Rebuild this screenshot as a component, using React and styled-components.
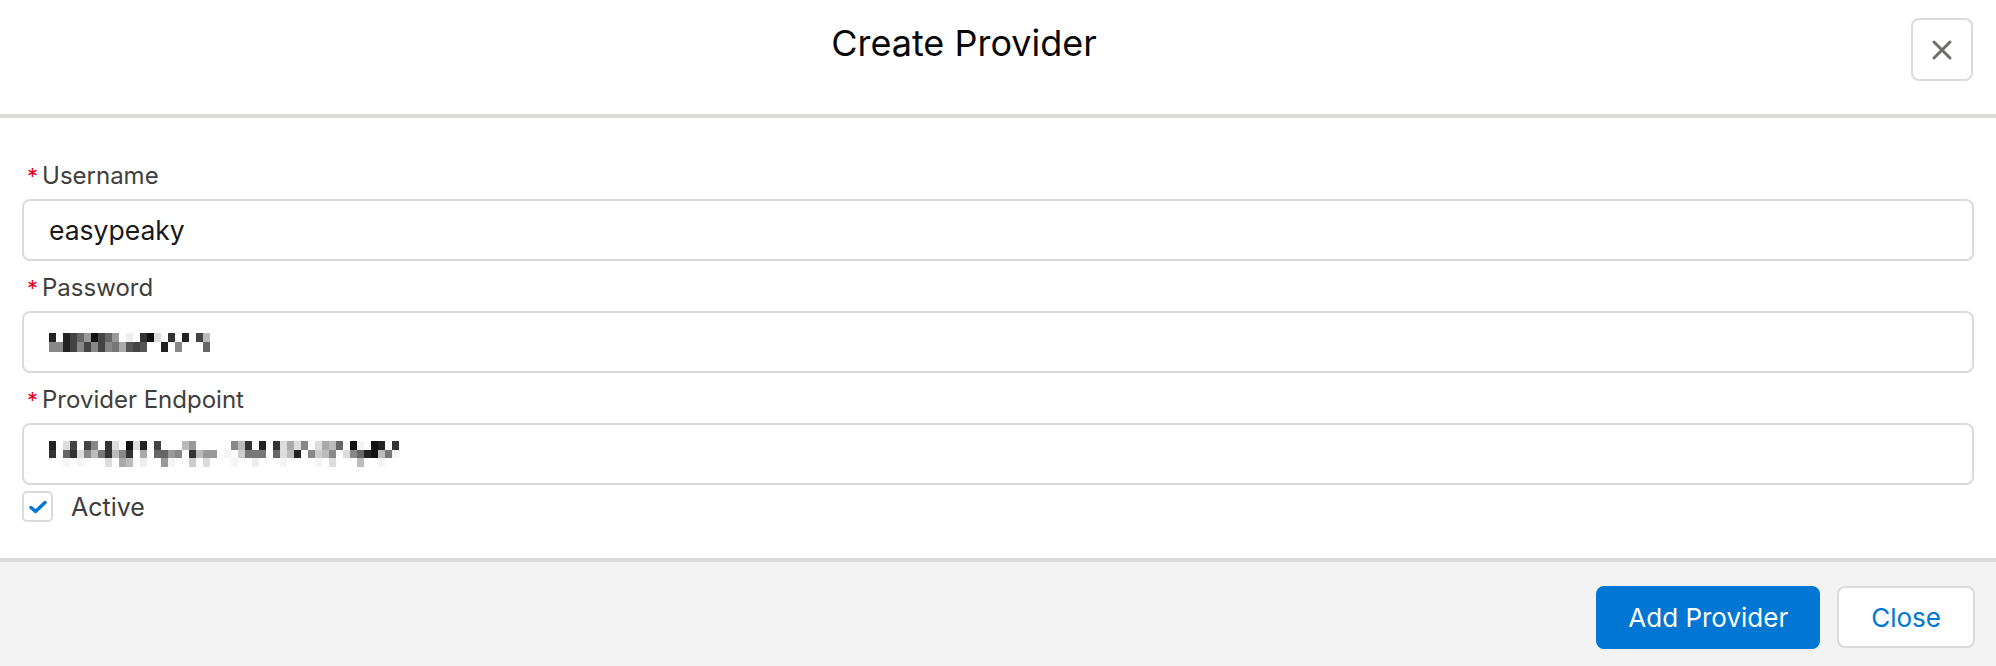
import React from 'react';
import styled, { createGlobalStyle } from 'styled-components';

const GlobalStyle = createGlobalStyle`
  html, body {
    margin: 0;
    padding: 0;
    background: #fff;
  }
  body {
    font-family: Inter, "Noto Sans", "Liberation Sans", sans-serif;
    color: #181818;
  }
  * { box-sizing: border-box; }
`;

const Modal = styled.div`
  height: 666px;
  display: flex;
  flex-direction: column;
  overflow: hidden;
`;

const Header = styled.header`
  height: 118px;
  flex-shrink: 0;
  display: flex;
  align-items: flex-start;
  gap: 5px;
  padding: 18px 23px 0 22px;
  border-bottom: 4px solid #dddbda;
`;

const Title = styled.h2`
  flex: 1;
  margin: 0;
  text-align: center;
  font-size: 36px;
  font-weight: 400;
  line-height: 50px;
  color: #080707;
`;

const IconButton = styled.button`
  width: 62px;
  height: 63px;
  border: 2px solid #dddbda;
  border-radius: 8px;
  background: #fff;
  display: flex;
  align-items: center;
  justify-content: center;
  padding: 0;
  cursor: pointer;
`;

const Body = styled.div`
  flex: 1;
  padding: 43px 22px 0 22px;
`;

const Field = styled.div`
  margin-bottom: 12px;
`;

const Label = styled.label`
  display: flex;
  align-items: center;
  font-size: 24px;
  line-height: 30px;
  color: #3e3e3c;
  margin-bottom: 8px;
`;

const Required = styled.abbr`
  color: #ea001e;
  text-decoration: none;
  margin: 0 4px 0 5px;
  font-size: 22px;
`;

const InputBox = styled.div`
  height: 62px;
  border: 2px solid #dddbda;
  border-radius: 8px;
  background: #fff;
  display: flex;
  align-items: center;
  padding: 0 25px;
  font-size: 26.5px;
  color: #181818;
`;

const Mosaic = styled.div`
  display: flex;
  flex-direction: column;
`;

const MosaicRow = styled.div`
  display: flex;
  height: ${p => p.$h}px;
`;

const Cell = styled.span`
  width: ${p => p.$w}px;
  height: 100%;
  background: ${p => p.$c};
`;

const CheckRow = styled.label`
  display: flex;
  align-items: center;
  gap: 18px;
  margin-top: -6px;
  font-size: 25px;
  color: #3e3e3c;
`;

const CheckBox = styled.span`
  width: 31px;
  height: 31px;
  border: 2px solid #dddbda;
  border-radius: 5px;
  background: #fff;
  display: flex;
  align-items: center;
  justify-content: center;
`;

const Footer = styled.footer`
  flex-shrink: 0;
  height: 108px;
  background: #f3f3f3;
  border-top: 4px solid #dddbda;
  display: flex;
  justify-content: flex-end;
  align-items: flex-start;
  gap: 17px;
  padding: 24px 21px 0 22px;
`;

const Button = styled.button`
  height: ${p => (p.$brand ? 63 : 62)}px;
  padding: 0 ${p => (p.$brand ? 30 : 32)}px;
  border-radius: 8px;
  border: 2px solid ${p => (p.$brand ? '#0176d3' : '#dddbda')};
  background: ${p => (p.$brand ? '#0176d3' : '#fff')};
  color: ${p => (p.$brand ? '#fff' : '#0176d3')};
  font-family: Inter, "Noto Sans", sans-serif;
  font-size: 26px;
  cursor: pointer;
`;

const grays = ['#111', '#222', '#333', '#444', '#555', '#666', '#777', '#888', '#999', '#aaa', '#bbb', '#ccc', '#ddd', '#eee', '#f5f5f5'];

const toColor = ch => (ch === '.' ? 'transparent' : grays[parseInt(ch, 16)]);

const PixelBlur = ({ rows, w = 7, h = 9 }) => (
  <Mosaic>
    {rows.map((r, i) => (
      <MosaicRow key={i} $h={h}>
        {r.split('').map((ch, j) => (
          <Cell key={j} $w={w} $c={toColor(ch)} />
        ))}
      </MosaicRow>
    ))}
  </Mosaic>
);

const passwordRows = [
  '1.13580358.d.20c.2.1.3a.',
  '77137373769434..1.7...5.',
];

const endpointRows = [
  '1.c3.37.2c.0c1.3...a8.....7a2.1.2c9c7.c9a5.0e.01.2',
  '2.52c7a62a72.9.5587.2a88.e.b666.5ca1.7ba7.c7510a6e',
  '..e.e...c.9a.d..8e..b.c...e..d...e....e.c...a..e..',
];

const XIcon = () => (
  <svg width="22" height="22" viewBox="0 0 22 22">
    <path d="M3 3 L19 19 M19 3 L3 19" stroke="#706e6b" strokeWidth="3" strokeLinecap="round" />
  </svg>
);

const CheckIcon = () => (
  <svg width="18" height="14" viewBox="0 0 18 14">
    <path d="M2 7.5 L6.5 11.5 L16 2.5" fill="none" stroke="#0176d3" strokeWidth="3.4" strokeLinecap="round" strokeLinejoin="round" />
  </svg>
);

const fields = [
  { label: 'Username', value: 'easypeaky' },
  { label: 'Password', rows: passwordRows },
  { label: 'Provider Endpoint', rows: endpointRows, h: 8.5 },
];

export default function App() {
  return (
    <>
      <GlobalStyle />
      <Modal>
        <Header>
          <Title>Create Provider</Title>
          <IconButton aria-label="Close">
            <XIcon />
          </IconButton>
        </Header>
        <Body>
          {fields.map(f => (
            <Field key={f.label}>
              <Label>
                <Required title="required">*</Required>
                {f.label}
              </Label>
              <InputBox>
                {f.value ? f.value : <PixelBlur rows={f.rows} h={f.h || 9.5} />}
              </InputBox>
            </Field>
          ))}
          <CheckRow>
            <CheckBox>
              <CheckIcon />
            </CheckBox>
            Active
          </CheckRow>
        </Body>
        <Footer>
          <Button $brand>Add Provider</Button>
          <Button>Close</Button>
        </Footer>
      </Modal>
    </>
  );
}
